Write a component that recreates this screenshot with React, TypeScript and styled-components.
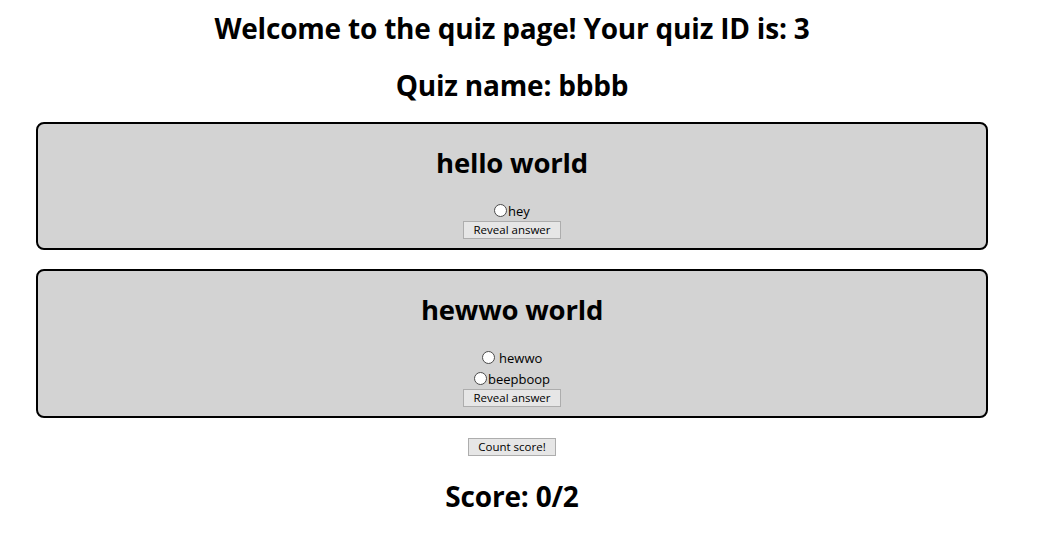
import React from "react";
import styled, { createGlobalStyle } from "styled-components";

const Global = createGlobalStyle`
  html, body { margin: 0; padding: 0; background: #ffffff; }
  body { font-family: "Open Sans", "Noto Sans", Arial, sans-serif; color: #000; }
`;

const Page = styled.div`
  width: 1024px;
  box-sizing: border-box;
  padding: 8px 8px 0;
  display: flex;
  flex-direction: column;
  align-items: stretch;
`;

const Title = styled.h1<{ $top?: number }>`
  margin: ${(p) => p.$top ?? 0}px 0 0;
  font-size: 28px;
  line-height: 40px;
  font-weight: 700;
  text-align: center;
  letter-spacing: -0.2px;
`;

const Card = styled.section<{ $top: number }>`
  margin: ${(p) => p.$top}px 28px 0;
  background: #d3d3d3;
  border: 2px solid #000;
  border-radius: 8px;
  padding: 21px 0 9px;
  display: flex;
  flex-direction: column;
  align-items: center;
`;

const Question = styled.h2`
  margin: 0 0 19px;
  font-size: 27.5px;
  line-height: 36px;
  font-weight: 700;
  letter-spacing: -0.2px;
`;

const Option = styled.label`
  display: flex;
  align-items: center;
  height: 21px;
  font-size: 13px;
  white-space: pre;
`;

const Radio = styled.input.attrs({ type: "radio" })`
  appearance: none;
  width: 13px;
  height: 13px;
  margin: 0 1px 0 0;
  border: 1px solid #4b4b4b;
  border-radius: 50%;
  background: #fff;
  box-sizing: border-box;
`;

const Button = styled.button<{ $top?: number }>`
  margin-top: ${(p) => p.$top ?? 0}px;
  height: 18px;
  padding: 0 9px;
  font-family: "Open Sans", "Noto Sans", Arial, sans-serif;
  font-size: 11.5px;
  line-height: 16px;
  color: #000;
  background: #e6e6e6;
  border: 1px solid #adadad;
  border-radius: 0;
  align-self: center;
`;

const quiz = [
  { q: "hello world", options: ["hey"] },
  { q: "hewwo world", options: [" hewwo", "beepboop"] },
];

export default function App() {
  return (
    <>
      <Global />
      <Page>
        <Title>Welcome to the quiz page! Your quiz ID is: 3</Title>
        <Title $top={17}>Quiz name: bbbb</Title>
        {quiz.map((item, i) => (
          <Card key={i} $top={i === 0 ? 17 : 19}>
            <Question>{item.q}</Question>
            {item.options.map((o) => (
              <Option key={o}>
                <Radio name={`q${i}`} />
                {o}
              </Option>
            ))}
            <Button>Reveal answer</Button>
          </Card>
        ))}
        <Button $top={20}>Count score!</Button>
        <Title $top={20}>Score: 0/2</Title>
      </Page>
    </>
  );
}
